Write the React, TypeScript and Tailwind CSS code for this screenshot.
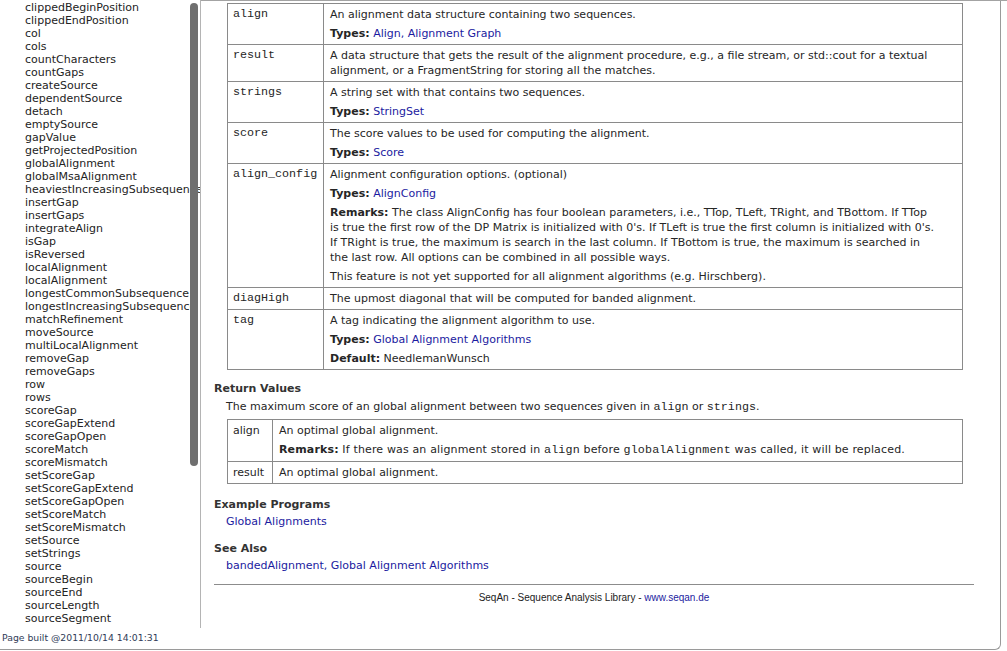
const menu = [
  "clippedBeginPosition",
  "clippedEndPosition",
  "col",
  "cols",
  "countCharacters",
  "countGaps",
  "createSource",
  "dependentSource",
  "detach",
  "emptySource",
  "gapValue",
  "getProjectedPosition",
  "globalAlignment",
  "globalMsaAlignment",
  "heaviestIncreasingSubsequence",
  "insertGap",
  "insertGaps",
  "integrateAlign",
  "isGap",
  "isReversed",
  "localAlignment",
  "localAlignment",
  "longestCommonSubsequence",
  "longestIncreasingSubsequence",
  "matchRefinement",
  "moveSource",
  "multiLocalAlignment",
  "removeGap",
  "removeGaps",
  "row",
  "rows",
  "scoreGap",
  "scoreGapExtend",
  "scoreGapOpen",
  "scoreMatch",
  "scoreMismatch",
  "setScoreGap",
  "setScoreGapExtend",
  "setScoreGapOpen",
  "setScoreMatch",
  "setScoreMismatch",
  "setSource",
  "setStrings",
  "source",
  "sourceBegin",
  "sourceEnd",
  "sourceLength",
  "sourceSegment",
];

function A({ children }: { children: React.ReactNode }) {
  return <span className="text-[#1b1ba0]">{children}</span>;
}

function Code({ children }: { children: React.ReactNode }) {
  return (
    <code className="font-['Liberation_Mono',monospace] text-[11.7px]">
      {children}
    </code>
  );
}

function Label({ children }: { children: React.ReactNode }) {
  return <b className="font-bold">{children}</b>;
}

function Cell({
  children,
  first,
  mono,
}: {
  children: React.ReactNode;
  first?: boolean;
  mono?: boolean;
}) {
  return (
    <td
      className={
        first
          ? "border border-[#8a8a8a] px-[5px] py-[3px] align-top leading-[15px] whitespace-nowrap"
          : "border border-[#8a8a8a] px-[6px] py-[3px] align-top leading-[15px]"
      }
    >
      <div className="flex flex-col gap-[4px]">
        {mono ? <Code>{children}</Code> : children}
      </div>
    </td>
  );
}

const params: Array<[string, React.ReactNode]> = [
  [
    "align",
    <>
      <p>An alignment data structure containing two sequences.</p>
      <p>
        <Label>Types:</Label> <A>Align, Alignment Graph</A>
      </p>
    </>,
  ],
  [
    "result",
    <p>
      A data structure that gets the result of the alignment procedure, e.g., a
      file stream, or std::cout for a textual alignment, or a FragmentString for
      storing all the matches.
    </p>,
  ],
  [
    "strings",
    <>
      <p>A string set with that contains two sequences.</p>
      <p>
        <Label>Types:</Label> <A>StringSet</A>
      </p>
    </>,
  ],
  [
    "score",
    <>
      <p>The score values to be used for computing the alignment.</p>
      <p>
        <Label>Types:</Label> <A>Score</A>
      </p>
    </>,
  ],
  [
    "align_config",
    <>
      <p>Alignment configuration options. (optional)</p>
      <p>
        <Label>Types:</Label> <A>AlignConfig</A>
      </p>
      <p>
        <Label>Remarks:</Label> The class AlignConfig has four boolean
        parameters, i.e., TTop, TLeft, TRight, and TBottom. If TTop
        <br />
        is true the first row of the DP Matrix is initialized with 0's. If TLeft
        is true the first column is initialized with 0's.
        <br />
        If TRight is true, the maximum is search in the last column. If TBottom
        is true, the maximum is searched in
        <br />
        the last row. All options can be combined in all possible ways.
      </p>
      <p>
        This feature is not yet supported for all alignment algorithms (e.g.
        Hirschberg).
      </p>
    </>,
  ],
  [
    "diagHigh",
    <p>The upmost diagonal that will be computed for banded alignment.</p>,
  ],
  [
    "tag",
    <>
      <p>A tag indicating the alignment algorithm to use.</p>
      <p>
        <Label>Types:</Label> <A>Global Alignment Algorithms</A>
      </p>
      <p>
        <Label>Default:</Label> NeedlemanWunsch
      </p>
    </>,
  ],
];

export default function App() {
  return (
    <div className="h-[651px] w-[1007px] overflow-hidden bg-white font-['DejaVu_Sans',Verdana,sans-serif] text-[11px] text-[#262626]">
      <div className="flex h-[650px] w-[1001px] rounded-br-[6px] border-r border-b border-[#9a9a9a]">
        {/* navigation frame */}
        <aside className="flex w-[201px] shrink-0 flex-col">
          <div className="relative h-[628px] overflow-hidden border-r border-[#b4b4b4]">
            <ul className="pt-[1px] pl-[25px] leading-[13px] whitespace-nowrap text-[#232323]">
              {menu.map((name, i) => (
                <li key={i}>{name}</li>
              ))}
            </ul>
            <div className="absolute top-[3px] left-[190px] h-[463px] w-[8px] rounded-full bg-[#6f6f6f]" />
          </div>
          <p className="pt-[4px] pl-[2px] text-[9.3px] leading-[12px] whitespace-nowrap text-[#2f3b57]">
            Page built @2011/10/14 14:01:31
          </p>
        </aside>

        {/* content frame */}
        <main className="relative flex-1 border-t border-[#a3a3a3] pt-[2px] pl-[13px]">
          <div className="absolute -top-px -right-[7px] h-px w-[7px] bg-[#a3a3a3]" />
          <table className="ml-[13px] w-[736px] border-collapse">
            <colgroup>
              <col className="w-[96px]" />
              <col />
            </colgroup>
            <tbody>
              {params.map(([name, desc]) => (
                <tr key={name}>
                  <Cell first mono>
                    {name}
                  </Cell>
                  <Cell>{desc}</Cell>
                </tr>
              ))}
            </tbody>
          </table>

          <h3 className="mt-[11px] leading-[15px] font-bold text-[#333]">
            Return Values
          </h3>
          <p className="mt-[3px] pl-[12px] leading-[15px]">
            The maximum score of an global alignment between two sequences given
            in <Code>align</Code> or <Code>strings</Code>.
          </p>
          <table className="mt-[4px] ml-[13px] w-[736px] border-collapse">
            <colgroup>
              <col className="w-[45px]" />
              <col />
            </colgroup>
            <tbody>
              <tr>
                <Cell first>align</Cell>
                <Cell>
                  <p>An optimal global alignment.</p>
                  <p className="tracking-[0.15px]">
                    <Label>Remarks:</Label> If there was an alignment stored in{" "}
                    <Code>align</Code> before <Code>globalAlignment</Code> was
                    called, it will be replaced.
                  </p>
                </Cell>
              </tr>
              <tr>
                <Cell first>result</Cell>
                <Cell>
                  <p>An optimal global alignment.</p>
                </Cell>
              </tr>
            </tbody>
          </table>

          <h3 className="mt-[13px] leading-[15px] font-bold text-[#333]">
            Example Programs
          </h3>
          <p className="mt-[2px] pl-[12px] leading-[15px]">
            <A>Global Alignments</A>
          </p>

          <h3 className="mt-[12px] leading-[15px] font-bold text-[#333]">
            See Also
          </h3>
          <p className="mt-[2px] pl-[12px] leading-[15px]">
            <A>bandedAlignment, Global Alignment Algorithms</A>
          </p>

          <hr className="mt-[11px] w-[760px] border-0 border-t border-[#8c8c8c]" />
          <p className="mt-[6px] w-[760px] text-center font-['Liberation_Sans',Arial,sans-serif] text-[10px] leading-[13px] text-[#222]">
            SeqAn - Sequence Analysis Library - <A>www.seqan.de</A>
          </p>
        </main>
      </div>
    </div>
  );
}
